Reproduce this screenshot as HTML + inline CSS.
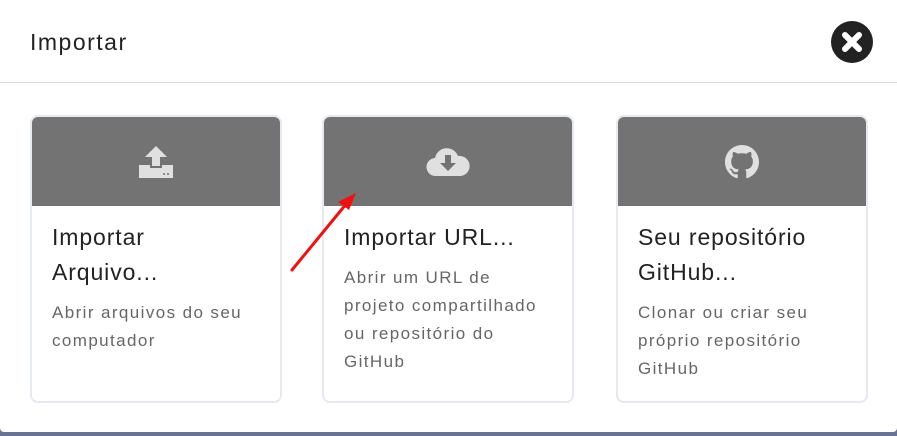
<!DOCTYPE html>
<html><head><style>
body{margin:0;width:897px;height:436px;overflow:hidden;background:#6a7394;font-family:"Liberation Sans",sans-serif;position:relative}
.dlg{position:absolute;left:0;top:0;width:897px;height:432px;background:#fff;border-radius:0 0 4px 4px}
.hdr{position:absolute;left:0;top:0;width:897px;height:82px;border-bottom:1px solid #dcdcdc}
.ttl{position:absolute;left:30px;top:29px;font-size:23px;color:#222;letter-spacing:1.5px}
.close{position:absolute;left:831px;top:21px;width:42px;height:42px;border-radius:50%;background:#222}
.card{position:absolute;top:115px;width:248px;height:284px;border:2px solid #e5eaf0;border-radius:8px;overflow:hidden;background:#fff}
.top{height:89px;background:#737373;position:relative}
.top svg{position:absolute;left:50%;top:50%;transform:translate(-50%,-50%)}
.ct{margin:14px 10px 0 20px;font-size:23px;line-height:35px;color:#222;letter-spacing:0.9px}
.cd{margin:9px 10px 0 20px;font-size:17px;line-height:28px;color:#666;letter-spacing:1.4px}
</style></head><body>
<div class="dlg">
<div class="hdr"><div class="ttl">Importar</div>
<div class="close"><svg width="42" height="42" viewBox="0 0 42 42"><path d="M14 14L28 28M28 14L14 28" stroke="#fff" stroke-width="6" stroke-linecap="round"/></svg></div></div>
<div class="card" style="left:30px"><div class="top"><svg width="36" height="36" viewBox="0 0 36 36"><path d="M18 2L7 13h7v9h8v-9h7z" fill="#e0e0e0"/><path d="M1 21h11v3h12v-3h11v13H1z" fill="#e0e0e0"/><circle cx="26" cy="30" r="1" fill="#737373"/><circle cx="30" cy="30" r="1" fill="#737373"/></svg></div>
<div class="ct">Importar<br>Arquivo...</div><div class="cd">Abrir arquivos do seu<br>computador</div></div>
<div class="card" style="left:322px"><div class="top"><svg width="44" height="32" viewBox="0 0 44 32"><path d="M10 30a9 9 0 0 1-1-18 12 12 0 0 1 23-2 10 10 0 0 1 3 20z" fill="#e0e0e0"/><path d="M19 9h6v8h5l-8 8-8-8h5z" fill="#737373"/></svg></div>
<div class="ct">Importar URL...</div><div class="cd">Abrir um URL de<br>projeto compartilhado<br>ou repositório do<br>GitHub</div></div>
<div class="card" style="left:616px"><div class="top"><svg width="34" height="34" viewBox="0 0 16 16"><path fill="#e0e0e0" d="M8 0C3.58 0 0 3.58 0 8c0 3.54 2.290 6.530 5.470 7.590.4.07.55-.17.55-.38 0-.19-.01-.82-.01-1.49-2.010.37-2.530-.49-2.690-.94-.09-.23-.48-.94-.82-1.130-.28-.15-.68-.52-.01-.53.63-.01 1.080.58 1.230.82.72 1.210 1.870.87 2.330.66.07-.52.28-.87.51-1.070-1.780-.2-3.640-.89-3.640-3.950 0-.87.31-1.590.82-2.150-.08-.2-.36-1.020.08-2.120 0 0 .67-.21 2.200.82.64-.18 1.320-.27 2-.27.68 0 1.360.09 2 .27 1.530-1.040 2.200-.82 2.200-.82.44 1.100.16 1.920.08 2.120.51.56.82 1.270.82 2.150 0 3.070-1.870 3.750-3.650 3.950.29.25.54.73.54 1.480 0 1.070-.01 1.930-.01 2.200 0 .21.15.46.55.38A8.013 8.013 0 0016 8c0-4.420-3.580-8-8-8z"/></svg></div>
<div class="ct">Seu repositório<br>GitHub...</div><div class="cd">Clonar ou criar seu<br>próprio repositório<br>GitHub</div></div>
<svg style="position:absolute;left:0;top:0" width="897" height="436"><path d="M292 270L347 203" stroke="#f01010" stroke-width="3" stroke-linecap="round"/><path d="M356 193L338 202L349 210z" fill="#f01010"/></svg>
</div>
</body></html>
